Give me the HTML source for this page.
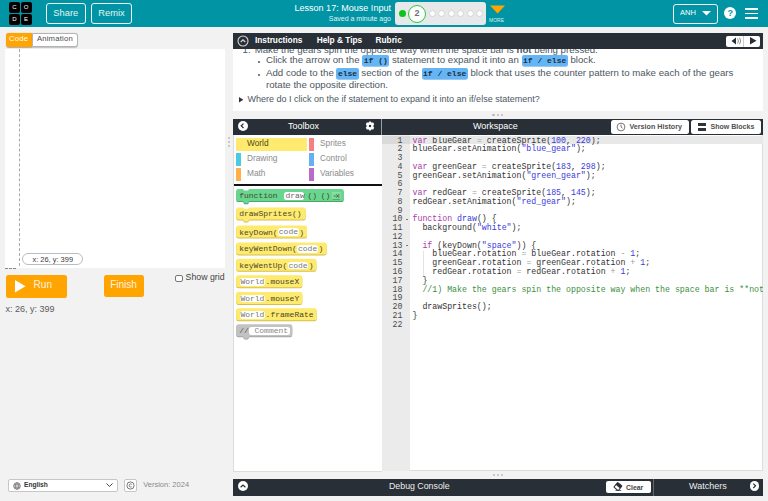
<!DOCTYPE html>
<html><head><meta charset="utf-8">
<style>
*{box-sizing:border-box;margin:0;padding:0}
html,body{width:768px;height:501px;overflow:hidden;background:#f2f2f2;font-family:"Liberation Sans",sans-serif;position:relative}
.a{position:absolute}
.nw{white-space:nowrap}
#hdr{left:0;top:0;width:768px;height:27px;background:#0094a4}
.logo{width:11px;height:11px;background:#000;border-radius:2px;color:#fff;font-size:6px;text-align:center;line-height:11px}
.hbtn{border:1.4px solid #f2f9fa;border-radius:3px;color:#fff;font-size:9px;text-align:center}
.bar{background:#292f36;color:#fff}
.mono{font-family:"Liberation Mono",monospace}
.it{font-size:9.68px;color:#4d575f;line-height:11.4px}
.cc{font-family:"Liberation Mono",monospace;font-weight:bold;font-size:8px;background:#63b5f6;color:#22303f;border-radius:2px;padding:1px 1.5px;box-shadow:0 0.5px 0 #3d8fd8}
.cat{height:13px;font-size:8.3px;color:#8c8c8c;line-height:10px}
.cbar{width:5px;height:13px}
.blk{height:12px;font-family:"Liberation Mono",monospace;font-size:8px;line-height:13.6px;color:#4a4630;padding-left:3px;white-space:nowrap}
.ico{display:inline-block;width:7px;height:7px;border:0.8px solid #3f8f58;background:#7ad896;vertical-align:-1px}
.cm{color:#888;padding:0 2px}
.y{background:#fdea6e;box-shadow:0 1px 0 #d9c44e}
.g{background:#68d68e;box-shadow:0 1px 0 #4fae6b}
.gr{background:#c4c4c4;box-shadow:0 1px 0 #a3a3a3}
.sl{display:inline-block;background:#fff;border-radius:3px;padding:0 0.6px;margin:0 0.6px;line-height:7.4px;height:7.4px;vertical-align:0.2px;color:#777}
#code{left:410px;top:135px;width:352.5px;height:335px;overflow:hidden}
#code div{height:8.77px;line-height:8.77px;font-family:"Liberation Mono",monospace;font-size:8.25px;color:#333;white-space:pre;padding-left:2.5px}
.k{color:#a83ba8}.n{color:#3a3adb}.s{color:#3a3adb}.c{color:#3b903e}.o{color:#999}
#gut div{height:8.77px;line-height:8.77px;font-family:"Liberation Mono",monospace;font-size:8.25px;color:#4a4a4a;text-align:right;padding-right:7.5px;white-space:pre}

</style></head><body>
<!-- HEADER -->
<div id="hdr" class="a">
  <div class="a logo" style="left:9px;top:2px">C</div>
  <div class="a logo" style="left:20.5px;top:2px">O</div>
  <div class="a logo" style="left:9px;top:13.5px">D</div>
  <div class="a logo" style="left:20.5px;top:13.5px">E</div>
  <div class="a hbtn" style="left:46px;top:3px;width:39.5px;height:21px;line-height:18.4px;font-size:9.3px;color:#e6f4f5">Share</div>
  <div class="a hbtn" style="left:91px;top:3px;width:41px;height:21px;line-height:18.4px;font-size:9.3px;color:#e6f4f5">Remix</div>
  <div class="a nw" style="right:377px;top:3.1px;color:#fff;font-size:9.05px">Lesson 17: Mouse Input</div>
  <div class="a nw" style="right:377px;top:15px;color:#e0f2f4;font-size:7px">Saved a minute ago</div>
  <!-- progress -->
  <div class="a" style="left:395px;top:2px;width:91px;height:23px;background:#e7e8ea;border-radius:3px"></div>
  <div class="a" style="left:398.5px;top:10px;width:7px;height:7px;border-radius:50%;background:#0dc31c"></div>
  <div class="a" style="left:408px;top:4.5px;width:18px;height:18px;border-radius:50%;background:#fff;border:1.5px solid #2cc63e;color:#6b7378;font-size:9px;font-weight:bold;text-align:center;line-height:15px">2</div>
  <div class="a" style="left:428.5px;top:10.3px;width:7px;height:7px;border-radius:50%;background:#fff;border:0.8px solid #d4d4d4"></div>
  <div class="a" style="left:438px;top:10.3px;width:7px;height:7px;border-radius:50%;background:#fff;border:0.8px solid #d4d4d4"></div>
  <div class="a" style="left:447.5px;top:10.3px;width:7px;height:7px;border-radius:50%;background:#fff;border:0.8px solid #d4d4d4"></div>
  <div class="a" style="left:457px;top:10.3px;width:7px;height:7px;border-radius:50%;background:#fff;border:0.8px solid #d4d4d4"></div>
  <div class="a" style="left:466.5px;top:10.3px;width:7px;height:7px;border-radius:50%;background:#fff;border:0.8px solid #d4d4d4"></div>
  <div class="a" style="left:475.5px;top:10.3px;width:7px;height:7px;border-radius:50%;background:#fff;border:0.8px solid #d4d4d4"></div>
  <svg class="a" style="left:490px;top:5px" width="15" height="9"><path d="M0 0.5H15L7.5 8.5Z" fill="#ffa400"/></svg>
  <div class="a nw" style="left:489px;top:17px;color:#d6eef0;font-size:5px">MORE</div>
  <!-- right -->
  <div class="a hbtn" style="left:673px;top:3.5px;width:45px;height:20px"></div>
  <div class="a nw" style="left:680px;top:8px;color:#fff;font-size:7.5px">ANH</div>
  <svg class="a" style="left:702px;top:11px" width="9" height="5"><path d="M0 0H9L4.5 4.5Z" fill="#fff"/></svg>
  <div class="a" style="left:724.3px;top:6.9px;width:12px;height:12px;border-radius:50%;background:#fff;color:#0094a4;font-size:9px;font-weight:bold;text-align:center;line-height:12px">?</div>
  <div class="a" style="left:744.5px;top:8.3px;width:13px;height:1.6px;background:#fff"></div>
  <div class="a" style="left:744.5px;top:12.6px;width:13px;height:1.6px;background:#fff"></div>
  <div class="a" style="left:744.5px;top:17.1px;width:13px;height:1.6px;background:#fff"></div>
</div>

<!-- LEFT VIS -->
<div class="a" style="left:6px;top:33px;width:26.2px;height:14.2px;background:#ffa400;border-radius:3px 0 0 3px;box-shadow:0 0.5px 1px rgba(0,0,0,.3)"></div>
<div class="a nw" style="left:9px;top:34.4px;font-size:7.7px;letter-spacing:0.22px;color:#fff">Code</div>
<div class="a" style="left:32.2px;top:33px;width:45.6px;height:14.2px;background:#fff;border:1px solid #b4b4b4;border-radius:0 3px 3px 0;box-shadow:0 0.5px 1px rgba(0,0,0,.2)"></div>
<div class="a nw" style="left:36.9px;top:34.4px;font-size:7.7px;letter-spacing:0.2px;color:#4d4d4d">Animation</div>
<div class="a" style="left:4.5px;top:48.8px;width:220px;height:219.7px;background:#fff"></div>
<div class="a" style="left:19px;top:48.8px;width:0;height:217px;border-left:0.7px dashed #aaa"></div>
<div class="a" style="left:5px;top:268px;width:11px;height:0;border-top:0.8px dashed #888"></div>
<div class="a" style="left:22.3px;top:253.2px;width:61px;height:12.3px;border:1px solid #b5bec4;border-radius:6.5px;background:#fff"></div>
<div class="a nw" style="left:32.5px;top:254.6px;font-size:7.45px;color:#3a3a3a">x: 26, y: 399</div>

<div class="a" style="left:5.5px;top:274.7px;width:61.4px;height:23px;background:#ffa400;border-radius:2.5px"></div>
<svg class="a" style="left:14.8px;top:279.8px" width="11" height="13"><path d="M0 0L10.5 6.25L0 12.5Z" fill="#fff"/></svg>
<div class="a nw" style="left:33.6px;top:279px;font-size:10px;color:#fff3e0">Run</div>
<div class="a" style="left:103.7px;top:274.8px;width:40px;height:22.7px;background:#ffa400;border-radius:2.5px"></div>
<div class="a nw" style="left:110.2px;top:279px;font-size:10px;color:#fff3e0">Finish</div>
<div class="a" style="left:175.4px;top:275.2px;width:7.5px;height:7px;border:0.9px solid #777;border-radius:2px;background:#fff"></div>
<div class="a nw" style="left:185.6px;top:272px;font-size:8.75px;color:#444">Show grid</div>
<div class="a nw" style="left:5.5px;top:303.5px;font-size:9px;color:#5b5b5b">x: 26, y: 399</div>

<!-- footer -->
<div class="a" style="left:8.3px;top:479px;width:109.4px;height:13px;background:#fff;border:0.8px solid #c6c6c6;border-radius:2px"></div>
<svg class="a" style="left:13px;top:481.5px" width="8" height="8" viewBox="0 0 8 8"><circle cx="4" cy="4" r="3.3" fill="none" stroke="#555" stroke-width=".7"/><ellipse cx="4" cy="4" rx="1.4" ry="3.3" fill="none" stroke="#555" stroke-width=".6"/><path d="M0.7 4H7.3M1.2 2.4H6.8M1.2 5.6H6.8" stroke="#555" stroke-width=".5"/></svg>
<div class="a nw" style="left:24px;top:481.3px;font-size:6.6px;font-weight:bold;color:#333">English</div>
<svg class="a" style="left:106px;top:483px" width="7" height="5"><path d="M0.5 0.5L3.5 3.5L6.5 0.5" fill="none" stroke="#444" stroke-width="1"/></svg>
<div class="a" style="left:123.7px;top:479px;width:13.8px;height:13px;background:#fff;border:0.8px solid #c6c6c6;border-radius:2px"></div>
<svg class="a" style="left:126px;top:481px" width="9" height="9" viewBox="0 0 9 9"><circle cx="4.5" cy="4.5" r="3.6" fill="none" stroke="#555" stroke-width=".8"/><path d="M5.7 3.4A1.5 1.5 0 1 0 5.7 5.6" fill="none" stroke="#555" stroke-width=".8"/></svg>
<div class="a nw" style="left:143.2px;top:479.7px;font-size:7.5px;color:#8a8a8a">Version: 2024</div>

<!-- INSTRUCTIONS -->
<div class="a" style="left:233px;top:49px;width:530px;height:62px;background:#fff;overflow:hidden">
  <div class="a nw it" style="left:9.6px;top:-5.2px">1.<span style="margin-left:4px">Make</span> the gears spin the opposite way when the space bar is <b>not</b> being pressed.</div>
  <div class="a" style="left:25.2px;top:11.7px;width:2.2px;height:2.2px;border-radius:50%;background:#4d575f"></div>
  <div class="a nw it" style="left:33px;top:5px">Click the arrow on the <span class="cc">if ()</span> statement to expand it into an <span class="cc">if / else</span> block.</div>
  <div class="a" style="left:25.2px;top:24.7px;width:2.2px;height:2.2px;border-radius:50%;background:#4d575f"></div>
  <div class="a it" style="left:33px;top:18px;width:480px">Add code to the <span class="cc">else</span> section of the <span class="cc">if / else</span> block that uses the counter pattern to make each of the gears rotate the opposite direction.</div>
  <svg class="a" style="left:5.6px;top:47.5px" width="5" height="6"><path d="M0 0L4.3 2.8L0 5.6Z" fill="#333"/></svg>
  <div class="a nw" style="left:14.5px;top:44.5px;font-size:9px;color:#4d575f">Where do I click on the if statement to expand it into an if/else statement?</div>
</div>
<div class="a bar" style="left:233px;top:33.3px;width:530px;height:16px"></div>
<svg class="a" style="left:236.5px;top:35.3px" width="12" height="12" viewBox="0 0 12 12"><circle cx="6" cy="6" r="5" fill="none" stroke="#d8d8d8" stroke-width="1.1"/><path d="M3.7 7L6 4.8L8.3 7" fill="none" stroke="#d8d8d8" stroke-width="1.2"/></svg>
<div class="a nw" style="left:254.9px;top:34.6px;font-size:8.3px;font-weight:bold;color:#fff">Instructions</div>
<div class="a nw" style="left:316.7px;top:34.6px;font-size:8.3px;font-weight:bold;color:#fff">Help &amp; Tips</div>
<div class="a nw" style="left:375.5px;top:34.6px;font-size:8.3px;font-weight:bold;color:#fff">Rubric</div>
<div class="a" style="left:726px;top:35.5px;width:34.2px;height:11.3px;background:#fff;border-radius:2px"></div>
<div class="a" style="left:743.4px;top:35.5px;width:0.7px;height:11.3px;background:#ccc"></div>
<svg class="a" style="left:731px;top:37px" width="12" height="8"><path d="M0.5 4L5 0.5V7.5Z" fill="#292f36"/><path d="M6.5 1.5Q8.5 4 6.5 6.5M8.5 0.7Q11 4 8.5 7.3" fill="none" stroke="#777" stroke-width=".8"/></svg>
<svg class="a" style="left:749.5px;top:37.3px" width="7" height="8"><path d="M0 0L6.5 3.8L0 7.6Z" fill="#292f36"/></svg>
<div class="a" style="left:492.3px;top:113.5px;width:2.4px;height:2.4px;border-radius:50%;background:#b8b8b8"></div>
<div class="a" style="left:496.6px;top:113.5px;width:2.4px;height:2.4px;border-radius:50%;background:#b8b8b8"></div>
<div class="a" style="left:500.9px;top:113.5px;width:2.4px;height:2.4px;border-radius:50%;background:#b8b8b8"></div>

<!-- splitter dots -->
<div class="a" style="left:228px;top:137px;width:2px;height:2px;border-radius:50%;background:#bbb"></div>
<div class="a" style="left:228px;top:141px;width:2px;height:2px;border-radius:50%;background:#bbb"></div>
<div class="a" style="left:228px;top:145px;width:2px;height:2px;border-radius:50%;background:#bbb"></div>

<!-- TOOLBOX -->
<div class="a" style="left:233px;top:134.7px;width:148.5px;height:337.3px;background:#fff;border-left:0.8px solid #ddd;border-bottom:0.8px solid #ddd"></div>
<div class="a bar" style="left:233px;top:118.7px;width:148px;height:16px"></div>
<div class="a" style="left:237.5px;top:120.7px;width:10px;height:10px;border-radius:50%;background:#fff"></div>
<svg class="a" style="left:240px;top:123px" width="5" height="6"><path d="M3.5 0.6L1.2 2.8L3.5 5" fill="none" stroke="#292f36" stroke-width="1.2"/></svg>
<div class="a nw" style="left:288px;top:121px;font-size:9px;color:#fff">Toolbox</div>
<svg class="a" style="left:364.4px;top:120.2px" width="12" height="12" viewBox="0 0 24 24"><path fill="#fff" fill-rule="evenodd" d="M12 1.5l2.2 3.6 4.2-.1 2 3.6-2.1 3.4 2.1 3.4-2 3.6-4.2-.1L12 22.5l-2.2-3.6-4.2.1-2-3.6L5.7 12 3.6 8.6l2-3.6 4.2.1zM12 9.6a2.4 2.4 0 1 0 0 4.8 2.4 2.4 0 0 0 0-4.8z"/></svg>

<div class="a" style="left:235.8px;top:137.9px;width:71.2px;height:13px;background:#fdea6e"></div>
<div class="a nw cat" style="left:247px;top:137.9px;color:#4a4a1a">World</div>
<div class="a cbar" style="left:309px;top:137.9px;background:#f57f84"></div>
<div class="a nw cat" style="left:320px;top:137.9px">Sprites</div>
<div class="a cbar" style="left:235.8px;top:152.9px;background:#4ccbe0"></div>
<div class="a nw cat" style="left:247px;top:152.9px">Drawing</div>
<div class="a cbar" style="left:309px;top:152.9px;background:#64b0f4"></div>
<div class="a nw cat" style="left:320px;top:152.9px">Control</div>
<div class="a cbar" style="left:235.8px;top:167.9px;background:#ffb04a"></div>
<div class="a nw cat" style="left:247px;top:167.9px">Math</div>
<div class="a cbar" style="left:309px;top:167.9px;background:#b86bc8"></div>
<div class="a nw cat" style="left:320px;top:167.9px">Variables</div>
<div class="a" style="left:233.5px;top:184.2px;width:148px;height:1.7px;background:#111"></div>

<svg class="a" style="left:0;top:0" width="768" height="501"><path d="M238.40 190.10H243.00L244.20 191.60H248.00L249.20 190.10H341.50Q343.70 190.10 343.70 192.30V199.90Q343.70 202.10 341.50 202.10H249.20L248.00 204.30H244.20L243.00 202.10H238.40Q236.20 202.10 236.20 199.90V192.30Q236.20 190.10 238.40 190.10Z" fill="#4aa866"/><path d="M238.40 189.10H243.00L244.20 190.60H248.00L249.20 189.10H341.50Q343.70 189.10 343.70 191.30V198.90Q343.70 201.10 341.50 201.10H249.20L248.00 203.30H244.20L243.00 201.10H238.40Q236.20 201.10 236.20 198.90V191.30Q236.20 189.10 238.40 189.10Z" fill="#68d68e"/><path d="M238.40 208.40H243.00L244.20 209.90H248.00L249.20 208.40H303.50Q305.70 208.40 305.70 210.60V218.20Q305.70 220.40 303.50 220.40H249.20L248.00 222.60H244.20L243.00 220.40H238.40Q236.20 220.40 236.20 218.20V210.60Q236.20 208.40 238.40 208.40Z" fill="#d6bf4a"/><path d="M238.40 207.40H243.00L244.20 208.90H248.00L249.20 207.40H303.50Q305.70 207.40 305.70 209.60V217.20Q305.70 219.40 303.50 219.40H249.20L248.00 221.60H244.20L243.00 219.40H238.40Q236.20 219.40 236.20 217.20V209.60Q236.20 207.40 238.40 207.40Z" fill="#fdea6e"/><path d="M238.40 226.50H304.80Q307.00 226.50 307.00 228.70V236.30Q307.00 238.50 304.80 238.50H238.40Q236.20 238.50 236.20 236.30V228.70Q236.20 226.50 238.40 226.50Z" fill="#d6bf4a"/><path d="M238.40 225.50H304.80Q307.00 225.50 307.00 227.70V235.30Q307.00 237.50 304.80 237.50H238.40Q236.20 237.50 236.20 235.30V227.70Q236.20 225.50 238.40 225.50Z" fill="#fdea6e"/><path d="M238.40 243.40H324.30Q326.50 243.40 326.50 245.60V253.20Q326.50 255.40 324.30 255.40H238.40Q236.20 255.40 236.20 253.20V245.60Q236.20 243.40 238.40 243.40Z" fill="#d6bf4a"/><path d="M238.40 242.40H324.30Q326.50 242.40 326.50 244.60V252.20Q326.50 254.40 324.30 254.40H238.40Q236.20 254.40 236.20 252.20V244.60Q236.20 242.40 238.40 242.40Z" fill="#fdea6e"/><path d="M238.40 259.80H314.20Q316.40 259.80 316.40 262.00V269.60Q316.40 271.80 314.20 271.80H238.40Q236.20 271.80 236.20 269.60V262.00Q236.20 259.80 238.40 259.80Z" fill="#d6bf4a"/><path d="M238.40 258.80H314.20Q316.40 258.80 316.40 261.00V268.60Q316.40 270.80 314.20 270.80H238.40Q236.20 270.80 236.20 268.60V261.00Q236.20 258.80 238.40 258.80Z" fill="#fdea6e"/><path d="M238.40 276.30H300.10Q302.30 276.30 302.30 278.50V286.10Q302.30 288.30 300.10 288.30H238.40Q236.20 288.30 236.20 286.10V278.50Q236.20 276.30 238.40 276.30Z" fill="#d6bf4a"/><path d="M238.40 275.30H300.10Q302.30 275.30 302.30 277.50V285.10Q302.30 287.30 300.10 287.30H238.40Q236.20 287.30 236.20 285.10V277.50Q236.20 275.30 238.40 275.30Z" fill="#fdea6e"/><path d="M238.40 293.00H300.10Q302.30 293.00 302.30 295.20V302.80Q302.30 305.00 300.10 305.00H238.40Q236.20 305.00 236.20 302.80V295.20Q236.20 293.00 238.40 293.00Z" fill="#d6bf4a"/><path d="M238.40 292.00H300.10Q302.30 292.00 302.30 294.20V301.80Q302.30 304.00 300.10 304.00H238.40Q236.20 304.00 236.20 301.80V294.20Q236.20 292.00 238.40 292.00Z" fill="#fdea6e"/><path d="M238.40 309.30H314.50Q316.70 309.30 316.70 311.50V319.10Q316.70 321.30 314.50 321.30H238.40Q236.20 321.30 236.20 319.10V311.50Q236.20 309.30 238.40 309.30Z" fill="#d6bf4a"/><path d="M238.40 308.30H314.50Q316.70 308.30 316.70 310.50V318.10Q316.70 320.30 314.50 320.30H238.40Q236.20 320.30 236.20 318.10V310.50Q236.20 308.30 238.40 308.30Z" fill="#fdea6e"/><path d="M238.40 325.20H290.10Q292.30 325.20 292.30 327.40V335.00Q292.30 337.20 290.10 337.20H249.20L248.00 339.40H244.20L243.00 337.20H238.40Q236.20 337.20 236.20 335.00V327.40Q236.20 325.20 238.40 325.20Z" fill="#a5a5a5"/><path d="M238.40 324.20H290.10Q292.30 324.20 292.30 326.40V334.00Q292.30 336.20 290.10 336.20H249.20L248.00 338.40H244.20L243.00 336.20H238.40Q236.20 336.20 236.20 334.00V326.40Q236.20 324.20 238.40 324.20Z" fill="#c2c2c2"/></svg>
<div class="a blk" style="left:236.2px;top:189.1px">function</div>
<div class="a" style="left:284.1px;top:191.8px;width:20.3px;height:8px;background:#fff;border-radius:2.5px"></div>
<div class="a blk" style="left:282.5px;top:189.1px;color:#666">draw</div>
<div class="a blk" style="left:304.5px;top:189.1px">()</div>
<div class="a blk" style="left:317.8px;top:189.1px">()</div>
<svg class="a" style="left:332.4px;top:192.2px" width="8.5" height="8" viewBox="0 0 8.5 8"><rect x=".4" y=".4" width="7.7" height="7.2" fill="#7edc9a" stroke="#9ae6b0" stroke-width=".6"/><path d="M1.5 4H6M4.3 2.3L6 4L4.3 5.7M6.8 1.8V6.2" fill="none" stroke="#3c6e4c" stroke-width=".8"/><path d="M.4 7.6H8.1" stroke="#3c6e4c" stroke-width=".6"/></svg>
<div class="a blk" style="left:236.2px;top:207.4px">drawSprites()</div>
<div class="a blk" style="left:236.2px;top:225.5px">keyDown(<span class="sl">code</span>)</div>
<div class="a blk" style="left:236.2px;top:242.4px">keyWentDown(<span class="sl">code</span>)</div>
<div class="a blk" style="left:236.2px;top:258.8px">keyWentUp(<span class="sl">code</span>)</div>
<div class="a blk" style="left:236.2px;top:275.3px"><span class="sl">World</span>.mouseX</div>
<div class="a blk" style="left:236.2px;top:292.0px"><span class="sl">World</span>.mouseY</div>
<div class="a blk" style="left:236.2px;top:308.3px"><span class="sl">World</span>.frameRate</div>
<div class="a" style="left:249px;top:326.8px;width:40.5px;height:8.4px;background:#fff;border-radius:2.5px"></div>
<div class="a blk" style="left:236.2px;top:324.2px;color:#555">//</div>
<div class="a blk" style="left:251.5px;top:324.2px;color:#888">Comment</div>

<!-- WORKSPACE -->
<div class="a" style="left:381.5px;top:134.8px;width:381px;height:336.5px;background:#fff;border-right:0.8px solid #ddd;border-bottom:0.8px solid #ddd"></div>
<div class="a" style="left:382px;top:134.8px;width:28px;height:336.5px;background:#ebebeb"></div>
<div class="a" style="left:382px;top:135.5px;width:381px;height:8.77px;background:#e8e8e8"></div>
<div class="a" style="left:382px;top:135.5px;width:28px;height:8.77px;background:#dadada"></div>
<div class="a bar" style="left:382px;top:118.7px;width:381px;height:16px"></div>
<div class="a" style="left:381px;top:118.7px;width:1px;height:16px;background:#9a9da1"></div>
<div class="a nw" style="left:473px;top:121px;font-size:9px;color:#fff">Workspace</div>
<div class="a" style="left:610.5px;top:120.3px;width:78.8px;height:13.6px;background:#fff;border-radius:2.5px"></div>
<svg class="a" style="left:616px;top:122px" width="10" height="10" viewBox="0 0 10 10"><circle cx="5" cy="5" r="3.9" fill="none" stroke="#555" stroke-width=".8"/><path d="M5 2.6V5L6.6 6.2" fill="none" stroke="#555" stroke-width=".8"/></svg>
<div class="a nw" style="left:629.5px;top:122.3px;line-height:10px;font-size:7.15px;font-weight:bold;color:#505050">Version History</div>
<div class="a" style="left:690.8px;top:120.3px;width:70.7px;height:13.6px;background:#fff;border-radius:2.5px"></div>
<div class="a" style="left:698px;top:123px;width:8px;height:3.2px;background:#333"></div>
<div class="a" style="left:698px;top:127.5px;width:8px;height:3.2px;background:#333"></div>
<div class="a nw" style="left:710.5px;top:122.3px;line-height:10px;font-size:7.05px;font-weight:bold;color:#505050">Show Blocks</div>

<div id="gut" class="a" style="left:382px;top:136.5px;width:28px;height:336px">
<div>1</div><div>2</div><div>3</div><div>4</div><div>5</div><div>6</div><div>7</div><div>8</div><div>9</div><div>10</div><div>11</div><div>12</div><div>13</div><div>14</div><div>15</div><div>16</div><div>17</div><div>18</div><div>19</div><div>20</div><div>21</div><div>22</div>
</div>
<div class="a" style="left:406px;top:219px;width:2.4px;height:0.9px;background:#777"></div>
<div class="a" style="left:406px;top:245.2px;width:2.4px;height:0.9px;background:#777"></div>
<div id="code" class="a" style="top:136.5px">
<div><span class="k">var</span> blueGear <span class="o">=</span> createSprite(<span class="n">100</span>, <span class="n">220</span>);</div>
<div>blueGear.setAnimation(<span class="s">"blue_gear"</span>);</div>
<div> </div>
<div><span class="k">var</span> greenGear <span class="o">=</span> createSprite(<span class="n">183</span>, <span class="n">298</span>);</div>
<div>greenGear.setAnimation(<span class="s">"green_gear"</span>);</div>
<div> </div>
<div><span class="k">var</span> redGear <span class="o">=</span> createSprite(<span class="n">185</span>, <span class="n">145</span>);</div>
<div>redGear.setAnimation(<span class="s">"red_gear"</span>);</div>
<div> </div>
<div><span class="k">function</span> <span class="s">draw</span>() {</div>
<div>  background(<span class="s">"white"</span>);</div>
<div> </div>
<div>  <span class="k">if</span> (keyDown(<span class="s">"space"</span>)) {</div>
<div>    blueGear.rotation <span class="o">=</span> blueGear.rotation <span class="o">-</span> <span class="n">1</span>;</div>
<div>    greenGear.rotation <span class="o">=</span> greenGear.rotation <span class="o">+</span> <span class="n">1</span>;</div>
<div>    redGear.rotation <span class="o">=</span> redGear.rotation <span class="o">+</span> <span class="n">1</span>;</div>
<div>  }</div>
<div>  <span class="c">//1) Make the gears spin the opposite way when the space bar is **not being pressed.</span></div>
<div> </div>
<div>  drawSprites();</div>
<div>}</div>
<div> </div>
</div>
<div class="a" style="left:422.5px;top:250.5px;width:0.8px;height:25px;background:#e3e3e3"></div>

<div class="a" style="left:493px;top:473.5px;width:2px;height:2px;border-radius:50%;background:#bbb"></div>
<div class="a" style="left:497px;top:473.5px;width:2px;height:2px;border-radius:50%;background:#bbb"></div>
<div class="a" style="left:501px;top:473.5px;width:2px;height:2px;border-radius:50%;background:#bbb"></div>

<!-- DEBUG -->
<div class="a bar" style="left:233px;top:478.6px;width:530px;height:17px"></div>
<div class="a" style="left:237.5px;top:481px;width:10px;height:10px;border-radius:50%;background:#fff"></div>
<svg class="a" style="left:239.5px;top:484px" width="6" height="4"><path d="M0.6 3.3L3 1L5.4 3.3" fill="none" stroke="#292f36" stroke-width="1.2"/></svg>
<div class="a nw" style="left:389px;top:480.6px;font-size:8.8px;color:#eee">Debug Console</div>
<div class="a" style="left:605.7px;top:480.8px;width:45.3px;height:12.7px;background:#fff;border-radius:2px"></div>
<svg class="a" style="left:612.5px;top:482.3px" width="10" height="9" viewBox="0 0 10 9"><g transform="rotate(40 5 4.5)"><rect x="2.2" y="1.6" width="5.6" height="6" rx=".6" fill="#fff" stroke="#292f36" stroke-width="1"/><rect x="2.2" y="1.6" width="5.6" height="3" fill="#292f36"/></g><path d="M2.5 8.4H8.2" stroke="#292f36" stroke-width=".8"/></svg>
<div class="a nw" style="left:626px;top:482.6px;font-size:6.9px;line-height:10px;font-weight:bold;color:#444">Clear</div>
<div class="a" style="left:653px;top:478.6px;width:0.8px;height:17px;background:#666"></div>
<div class="a nw" style="left:689px;top:480.6px;font-size:9px;color:#eee">Watchers</div>
<div class="a" style="left:749.5px;top:481px;width:9.5px;height:9.5px;border-radius:50%;background:#fff"></div>
<svg class="a" style="left:752px;top:483px" width="5" height="6"><path d="M1.3 0.6L3.5 2.8L1.3 5" fill="none" stroke="#292f36" stroke-width="1.2"/></svg>
</body></html>
